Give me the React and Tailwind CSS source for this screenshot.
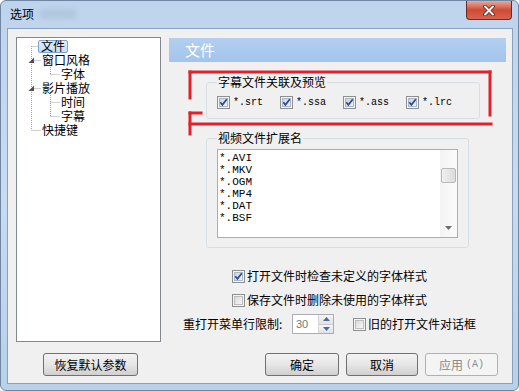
import React from "react";

function Check({ checked }) {
  return (
    <svg width="13" height="13" viewBox="0 0 13 13" className="shrink-0">
      <defs>
        <linearGradient id={checked ? "cg1" : "cg0"} x1="0" y1="0" x2="1" y2="1">
          <stop offset="0" stopColor={checked ? "#c3d0e0" : "#d6d6d6"} />
          <stop offset="1" stopColor={checked ? "#f4f7fb" : "#fbfbfb"} />
        </linearGradient>
      </defs>
      <rect x="0.5" y="0.5" width="12" height="12" fill="#f4f4f4" stroke="#8e8f8f" />
      <rect x="2.5" y="2.5" width="8" height="8" fill={`url(#${checked ? "cg1" : "cg0"})`} stroke={checked ? "#a9b7c9" : "#bdbdbd"} />
      {checked && (
        <path d="M3.3 6.3 L5.4 8.8 L9.8 3.2" fill="none" stroke="#2c4a83" strokeWidth="1.7" />
      )}
    </svg>
  );
}

function Btn({ children, className = "", disabled }) {
  return (
    <div
      className={
        "h-[23px] flex items-center justify-center rounded-[3px] border text-[12px] " +
        (disabled
          ? "border-[#adb2b5] bg-[#f4f4f4] text-[#8a8a8a] "
          : "border-[#707070] bg-gradient-to-b from-[#f3f3f3] via-[#e6e6e6] to-[#d0d0d0] text-black ") +
        className
      }
    >
      {children}
    </div>
  );
}

function TreeRow({ children, indent, selected }) {
  return (
    <div className="h-[14px] flex items-center leading-[14px]">
      {selected ? (
        <span className="ml-[21px] h-[13px] px-[2px] flex items-center rounded-[2px] border border-[#7da2ce] bg-gradient-to-b from-[#e4effd] to-[#c4dcfb] leading-[12px]">
          {children}
        </span>
      ) : (
        <span className={indent === 2 ? "ml-[44px]" : "ml-[25px]"}>{children}</span>
      )}
    </div>
  );
}

export default function App() {
  const exts = ["*.AVI", "*.MKV", "*.OGM", "*.MP4", "*.DAT", "*.BSF"];
  return (
    <div className="relative w-[519px] h-[391px] overflow-hidden rounded-[6px] border border-[#6f87a3] bg-gradient-to-b from-[#bed4ec] via-[#c8dbef] to-[#b9d0e9] font-['Noto_Sans_CJK_SC',sans-serif] text-[12px] text-black">
      {/* title bar */}
      <div className="h-[27px] flex items-start">
        <div className="ml-[9px] mt-[6px] leading-[14px] text-[12px]">选项</div>
        <div className="ml-[6px] mt-[8px] w-[36px] h-[10px] rounded-[3px] bg-[#a9bfd6] blur-[2px] opacity-60"></div>
        <div className="ml-auto mr-[6px] w-[46px] h-[19px] rounded-b-[4px] border border-t-0 border-[#6b2a22] bg-gradient-to-b from-[#e9a899] via-[#cf4a35] to-[#d8634e] flex items-center justify-center">
          <svg width="14" height="11" viewBox="0 0 14 11">
            <path d="M3 1.5 L11 9.5 M11 1.5 L3 9.5" stroke="#5a1c14" strokeWidth="3.6" strokeLinecap="round" />
            <path d="M3 1.5 L11 9.5 M11 1.5 L3 9.5" stroke="#ffffff" strokeWidth="2" strokeLinecap="round" />
          </svg>
        </div>
      </div>

      {/* client area */}
      <div className="ml-[6px] w-[506px] h-[356px] border border-[#8aa1bd] bg-[#f0f0f0] flex flex-col">
        <div className="flex pt-[8px] pl-[8px] gap-[8px]">
          {/* tree */}
          <div className="relative w-[145px] h-[305px] border border-[#828790] bg-white pt-[1px]">
            <svg className="absolute left-0 top-0" width="143" height="140" viewBox="0 0 143 140">
              <g stroke="#a0a0a0" strokeWidth="1" strokeDasharray="1 1" fill="none">
                <path d="M14.5 8 V92" />
                <path d="M14.5 8.5 H21" />
                <path d="M14.5 22.5 H24" />
                <path d="M14.5 50.5 H24" />
                <path d="M14.5 92.5 H24" />
                <path d="M33.5 27 V36" />
                <path d="M33.5 36.5 H43" />
                <path d="M33.5 55 V78" />
                <path d="M33.5 64.5 H43" />
                <path d="M33.5 78.5 H43" />
              </g>
              <polygon points="17,19.5 17,25 11.5,25" fill="#4f4f4f" />
              <polygon points="17,47.5 17,53 11.5,53" fill="#4f4f4f" />
            </svg>
            <div className="relative">
              <TreeRow selected>文件</TreeRow>
              <TreeRow>窗口风格</TreeRow>
              <TreeRow indent={2}>字体</TreeRow>
              <TreeRow>影片播放</TreeRow>
              <TreeRow indent={2}>时间</TreeRow>
              <TreeRow indent={2}>字幕</TreeRow>
              <TreeRow>快捷键</TreeRow>
            </div>
          </div>

          {/* right panel */}
          <div className="w-[337px] flex flex-col">
            <div className="mt-[1px] h-[24px] bg-gradient-to-b from-[#b3cff0] to-[#a3c4eb] flex items-center pl-[16px] text-white text-[15px] leading-[18px]">
              文件
            </div>

            <fieldset className="ml-[37px] w-[263px] mt-[12px] border border-[#d5dfe5] rounded-[3px] px-[10px] pb-[9px]">
              <legend className="px-[1px] leading-[16px]">字幕文件关联及预览</legend>
              <div className="mt-[6px] flex h-[13px]">
                {["*.srt", "*.ssa", "*.ass", "*.lrc"].map((t) => (
                  <div key={t} className="w-[63px] flex items-center gap-[3px]">
                    <Check checked />
                    <span className="font-['Liberation_Mono',monospace] text-[10px] leading-[13px]">{t}</span>
                  </div>
                ))}
              </div>
            </fieldset>

            <fieldset className="ml-[37px] w-[263px] mt-[11px] border border-[#d5dfe5] rounded-[3px] px-[10px] pb-[9px]">
              <legend className="px-[1px] leading-[16px]">视频文件扩展名</legend>
              <div className="mt-[3px] w-[241px] h-[89px] border border-[#abadb3] bg-white flex">
                <div className="flex-1 pl-[1px] pt-[2px] font-['Liberation_Mono',monospace] text-[11px] leading-[12px]">
                  {exts.map((e) => (
                    <div key={e}>{e}</div>
                  ))}
                </div>
                <div className="w-[17px] h-full bg-gradient-to-r from-[#f3f3f3] to-[#fbfbfb] flex flex-col items-center">
                  <div className="h-[18px]"></div>
                  <div className="w-[15px] h-[15px] rounded-[2px] border border-[#b8b8b8] bg-gradient-to-r from-[#f0f0f0] to-[#dcdcdc]"></div>
                  <div className="flex-1"></div>
                  <svg width="7" height="4" viewBox="0 0 7 4" className="mb-[7px]">
                    <polygon points="0,0 7,0 3.5,4" fill="#6d6d6d" />
                  </svg>
                </div>
              </div>
            </fieldset>

            <div className="mt-[20px] h-[16px] ml-[63px] flex items-center gap-[2px]">
              <Check checked />
              <span className="leading-[16px]">打开文件时检查未定义的字体样式</span>
            </div>
            <div className="mt-[8px] h-[16px] ml-[63px] flex items-center gap-[2px]">
              <Check />
              <span className="leading-[16px]">保存文件时删除未使用的字体样式</span>
            </div>
            <div className="mt-[6px] h-[20px] ml-[14px] flex items-center">
              <span className="w-[109px] leading-[16px]">重打开菜单行限制:</span>
              <div className="w-[42px] h-[20px] border border-[#abadb3] bg-white flex">
                <div className="flex-1 pl-[3px] text-[#777] text-[11px] leading-[18px] font-['Liberation_Sans',sans-serif]">30</div>
                <div className="w-[15px] flex flex-col border-l border-[#d5d5d5]">
                  <div className="flex-1 flex items-center justify-center bg-gradient-to-b from-[#f5f5f5] to-[#e2e2e2] border-b border-[#c9c9c9]">
                    <svg width="7" height="4" viewBox="0 0 7 4"><polygon points="3.5,0 7,4 0,4" fill="#4a6a9c" /></svg>
                  </div>
                  <div className="flex-1 flex items-center justify-center bg-gradient-to-b from-[#f5f5f5] to-[#e2e2e2]">
                    <svg width="7" height="4" viewBox="0 0 7 4"><polygon points="0,0 7,0 3.5,4" fill="#4a6a9c" /></svg>
                  </div>
                </div>
              </div>
              <div className="ml-[19px] flex items-center gap-[2px]">
                <Check />
                <span className="leading-[16px]">旧的打开文件对话框</span>
              </div>
            </div>
          </div>
        </div>

        {/* bottom buttons */}
        <div className="mt-[11px] flex pl-[35px] pr-[14px]">
          <Btn className="w-[95px]">恢复默认参数</Btn>
          <div className="ml-auto flex gap-[7px]">
            <Btn className="w-[74px]">确定</Btn>
            <Btn className="w-[72px]">取消</Btn>
            <Btn className="w-[73px]" disabled>
              应用 <span className="ml-[3px] font-['Liberation_Mono',monospace] text-[10px]">(A)</span>
            </Btn>
          </div>
        </div>
      </div>

      {/* red annotation */}
      <svg className="pointer-events-none absolute left-0 top-0" width="519" height="391" viewBox="1 1 519 391">
        <g stroke="#e1202c" strokeWidth="3" fill="none" strokeLinecap="square">
          <path d="M190 72 H490" />
          <path d="M490 72 V115" />
          <path d="M190 72 V98" />
          <path d="M190 113 H201" />
          <path d="M190 113 V134" />
          <path d="M190 124 H491" />
        </g>
      </svg>
    </div>
  );
}
